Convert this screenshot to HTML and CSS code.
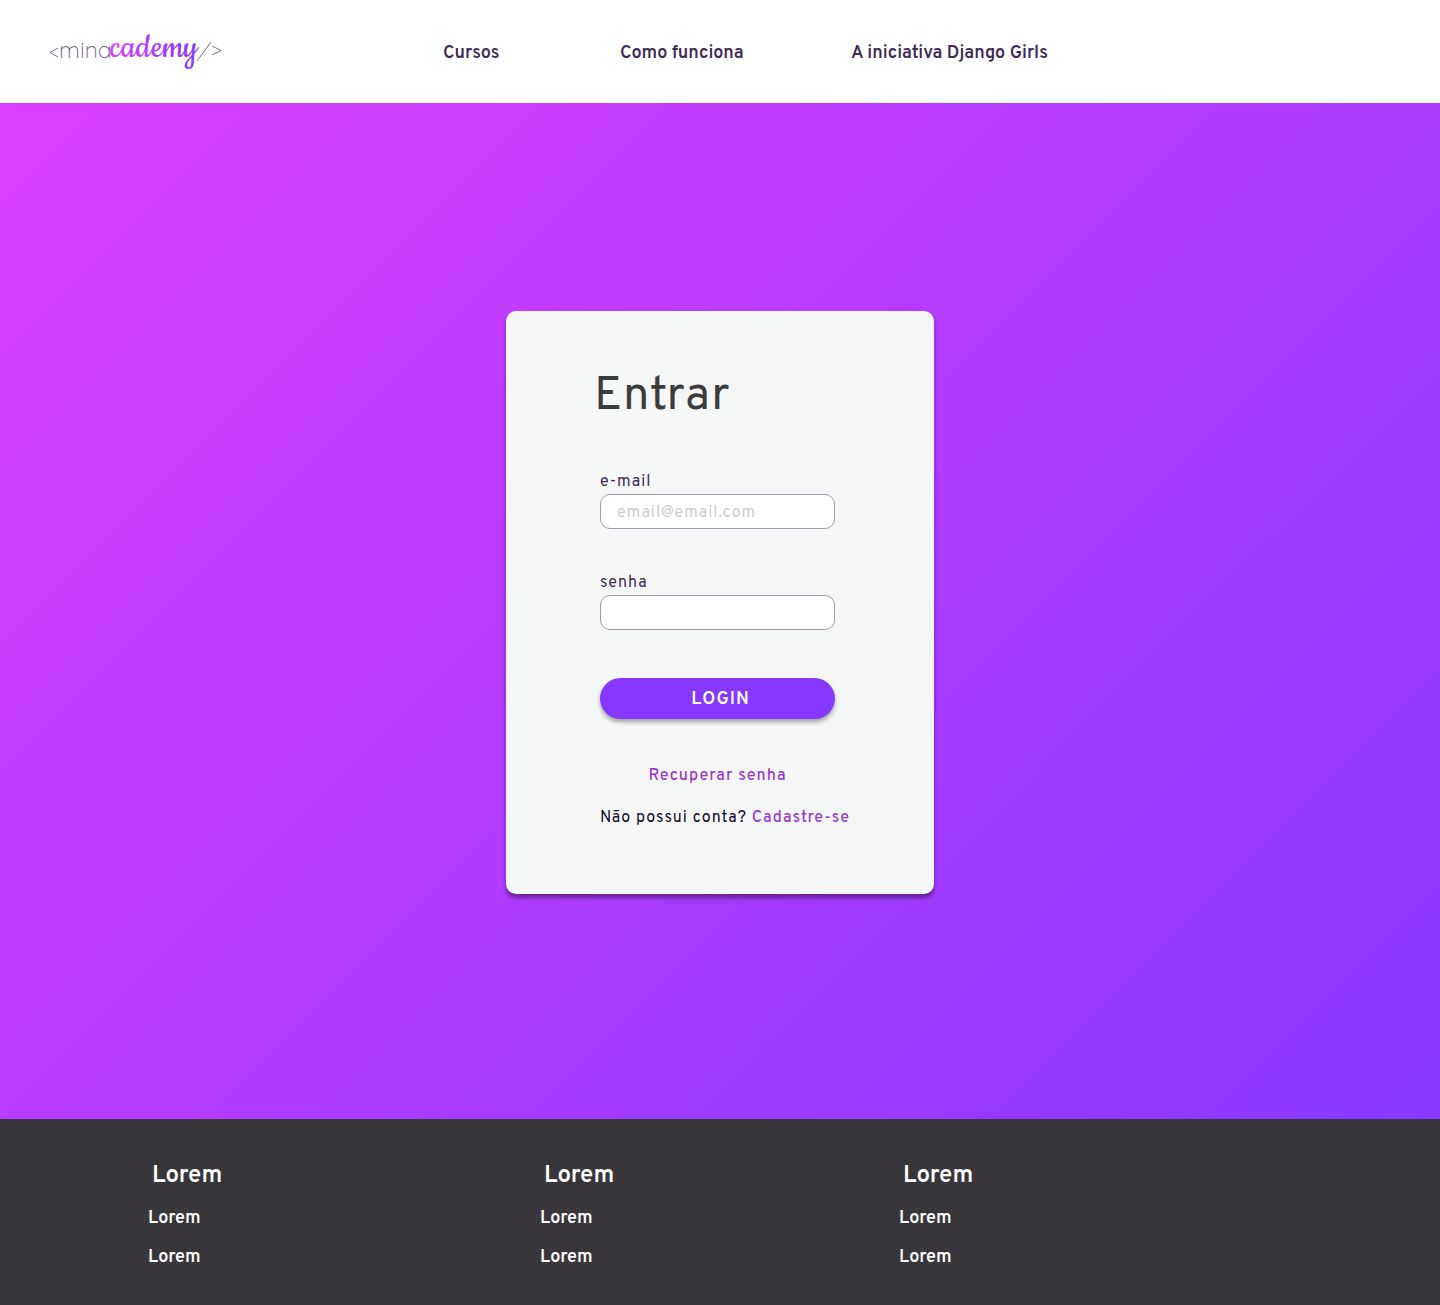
FILE: index.html
```html
<!DOCTYPE html>
<html lang="pt-BR">
<head>
  <meta charset="utf-8">
  <meta name="viewport" content="width=device-width, initial-scale=1">
  <title>minacademy</title>
  <link rel="stylesheet" href="styles.css">
</head>
<body>
  <header class="site-header">
    <a class="logo" href="#" aria-label="minacademy">
      <svg class="logo-art" width="174" height="64" viewBox="0 -10 174 64">
        <defs>
          <linearGradient id="brand" gradientUnits="userSpaceOnUse" x1="61" y1="0" x2="150" y2="0">
            <stop offset="0" stop-color="#db3fff"/>
            <stop offset="1" stop-color="#8738ff"/>
          </linearGradient>
        </defs>
        <g class="logo-mark">
          <path d="M10 19 2 23.500 10 28"/>
          <path d="M163 13 149 32"/>
          <path d="M164 17 173 21.500 164 26"/>
        </g>
        <text class="logo-thin" x="11" y="29">mina</text>
        <text class="logo-script" x="62" y="28" fill="url(#brand)">cademy</text>
      </svg>
    </a>
    <nav class="main-nav">
      <a href="#">Cursos</a>
      <a href="#">Como funciona</a>
      <a href="#">A iniciativa Django Girls</a>
    </nav>
  </header>

  <main class="hero">
    <section class="card">
      <h1 class="card-title">Entrar</h1>
      <form class="login-form">
        <div class="field">
          <label for="email">e-mail</label>
          <input id="email" type="email" placeholder="email@email.com">
        </div>
        <div class="field">
          <label for="senha">senha</label>
          <input id="senha" type="password">
        </div>
        <button class="login-button" type="submit">LOGIN</button>
        <a class="accent-link recover" href="#">Recuperar senha</a>
        <p class="signup">Não possui conta? <a class="accent-link" href="#">Cadastre-se</a></p>
      </form>
    </section>
  </main>

  <footer class="site-footer">
    <section>
      <h2>Lorem</h2>
      <ul>
        <li><a href="#">Lorem</a></li>
        <li><a href="#">Lorem</a></li>
      </ul>
    </section>
    <section>
      <h2>Lorem</h2>
      <ul>
        <li><a href="#">Lorem</a></li>
        <li><a href="#">Lorem</a></li>
      </ul>
    </section>
    <section>
      <h2>Lorem</h2>
      <ul>
        <li><a href="#">Lorem</a></li>
        <li><a href="#">Lorem</a></li>
      </ul>
    </section>
  </footer>
</body>
</html>
```
FILE: styles.css
```css
* {
  box-sizing: border-box;
}

body {
  margin: 0;
  font-family: Overpass, Roboto, "Liberation Sans", sans-serif;
  font-size: 16px;
  line-height: 20px;
  color: #3f2a56;
}

a {
  color: inherit;
  text-decoration: none;
}

h1,
h2,
p,
ul {
  margin: 0;
  padding: 0;
}

ul {
  list-style: none;
}

/* Header */
.site-header {
  display: grid;
  grid-template-columns: 395fr 997fr;
  align-items: center;
  padding: 19px 0 20px 48px;
  background: #fff;
}

.logo,
.logo-art {
  display: block;
}

.logo-art {
  overflow: visible;
}

.logo-mark {
  fill: none;
  stroke: #7d6f8d;
  stroke-width: 1;
}

.logo-thin {
  font-family: Quicksand, Lato, sans-serif;
  font-size: 23px;
  font-weight: 300;
  fill: #6d5c80;
}

.logo-script {
  font-family: Cookie, "Liberation Serif", cursive;
  font-size: 39px;
}

.main-nav {
  display: grid;
  grid-template-columns: 177fr 231fr 589fr;
  padding-top: 5px;
  font-size: 18px;
  font-weight: 600;
}

/* Login card */
.hero {
  display: flex;
  justify-content: center;
  padding: 208px 16px 225px;
  background: linear-gradient(135deg, #db3fff, #8738ff);
}

.card {
  width: 100%;
  max-width: 428px;
  padding: 58px 88px 66px;
  background: #f5f7f6;
  border-radius: 10px;
  box-shadow: 0 4px 4px rgba(0, 0, 0, 0.4);
  letter-spacing: 1px;
}

.card-title {
  font-size: 47px;
  font-weight: 400;
  line-height: 56px;
  color: #3c3c3c;
}

.login-form {
  display: flex;
  flex-direction: column;
  gap: 44px;
  padding: 47px 11px 0 6px;
}

.field {
  display: grid;
  gap: 2px;
}

.field input {
  width: 100%;
  height: 35px;
  padding: 2px 16px 0;
  font: inherit;
  letter-spacing: inherit;
  color: inherit;
  background: #fff;
  border: 1px solid #a29bab;
  border-radius: 10px;
}

.field input::placeholder {
  color: #ccced0;
}

.login-button {
  height: 41px;
  margin-top: 4px;
  padding: 3px 0 0 6px;
  font: inherit;
  font-size: 18px;
  font-weight: 600;
  letter-spacing: inherit;
  color: #fff;
  background: #8738ff;
  border: 0;
  border-radius: 21px;
  box-shadow: 0 3px 4px rgba(0, 0, 0, 0.35);
}

.accent-link {
  font-weight: 500;
  color: #953ad0;
}

.recover {
  align-self: center;
  margin-top: 3px;
}

.signup {
  margin-top: -22px;
  white-space: nowrap;
  color: #12082b;
}

/* Footer */
.site-footer {
  display: grid;
  grid-template-columns: 392fr 359fr 541fr;
  padding: 43px 0 37px 148px;
  font-size: 18px;
  font-weight: 600;
  color: #fff;
  background: #39363b;
}

.site-footer h2 {
  padding-left: 4px;
  font-size: 24px;
  font-weight: 600;
  line-height: 28px;
}

.site-footer ul {
  display: grid;
  gap: 19px;
  padding-top: 19px;
}
```
